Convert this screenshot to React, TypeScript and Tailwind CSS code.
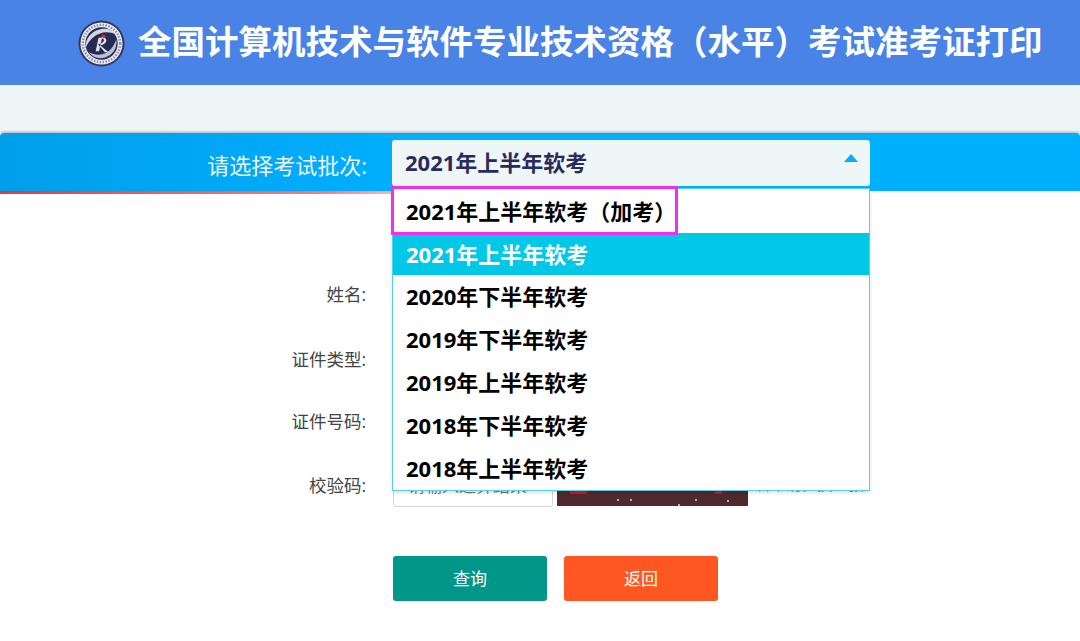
import React from "react";

const font = { fontFamily: '"Open Sans","Noto Sans CJK SC",sans-serif' };
const options = ["2020年下半年软考", "2019年下半年软考", "2019年上半年软考", "2018年下半年软考", "2018年上半年软考"];

function Logo() {
  return (
    <svg width="47" height="47" viewBox="0 0 48 48" className="mt-[4px] shrink-0">
      <circle cx="24" cy="24" r="23.500" fill="#34365a" />
      <circle cx="24" cy="24" r="21.500" fill="#e9eaf1" />
      <circle cx="24" cy="24" r="19" fill="none" stroke="#8a8da8" strokeWidth="2.500" strokeDasharray="1.500 1.500" />
      <circle cx="24" cy="24" r="16.500" fill="#262a55" />
      <path d="M8 28C7 18 16 9 27 9c5 0 9 2 12 6-6-3-12-3-17-1-6 2-11 7-14 14Z" fill="#d5d7e3" />
      <path d="M39 20c2 10-6 19-16 19-5 0-9-2-12-6 6 3 12 3 17 1 5-2 9-8 11-14Z" fill="#bcc0d2" />
      <path d="M18 32l3-14h3.500l-3 14h-3.500Zm5-6c4-1 6-3 6-5 0-2-2-4-5-4v2c2 0 2.500 1 2.500 2 0 1.500-3 3-6 4l7 8h3.500l-8-7Z" fill="#e4e5ee" />
      <path d="M24 14l5 2.500-3.500 2.500-1.500-5Z" fill="#d8263a" />
    </svg>
  );
}

function FormRow({ label, className, children }: { label: string; className: string; children?: React.ReactNode }) {
  return (
    <div className={`flex items-center ${className}`}>
      <div className="w-[366px] shrink-0 text-right text-[17.500px] leading-[22px] text-[#444]">{label}:</div>
      <div className="ml-[27px] flex flex-1 items-center">{children}</div>
    </div>
  );
}

export default function App() {
  return (
    <div className="relative h-[641px] w-[1080px] overflow-hidden bg-white" style={font}>
      <header className="flex h-[85px] items-center bg-[#4a83e6] pb-[2px] pl-[78px]">
        <Logo />
        <h1 className="ml-[13px] whitespace-nowrap text-[33.500px] font-bold leading-none text-white">
          全国计算机技术与软件专业技术资格（水平）考试准考证打印
        </h1>
      </header>
      <div className="h-[48px] bg-[#eef6f8]" />
      <div className="relative z-10 flex h-[58px] items-start rounded-t-[4px] bg-gradient-to-r from-[#009fea] to-[#00b0ff] to-40% shadow-[0_-1px_3px_rgba(0,0,0,0.3)]">
        <div className="w-[367px] shrink-0 pt-[17px] text-right text-[22px] leading-[30px] text-[#eef6f8]">请选择考试批次:</div>
        <div className="ml-[25px] mt-[7px] flex h-[46px] w-[478px] items-center justify-between rounded-[3px] bg-[#eef6f8] pb-[2px] pl-[13px] pr-[12px]">
          <span className="text-[22px] font-bold text-[#2a2a5c]">2021年上半年软考</span>
          <svg width="14" height="8" viewBox="0 0 14 8" className="mb-[8px]"><path d="M7 0l7 8H0Z" fill="#00aeff" /></svg>
        </div>
      </div>
      <div className="h-[3px] bg-gradient-to-r from-[#e63946] via-[#f0808a] via-30% to-white to-45%" />

      <main className="pt-[89px]">
        <FormRow label="姓名" className="h-[22px]" />
        <FormRow label="证件类型" className="mt-[43px] h-[22px]" />
        <FormRow label="证件号码" className="mt-[40px] h-[22px]" />
        <FormRow label="校验码" className="mt-[30px] h-[45px]">
          <div className="flex h-[45px] w-[160px] items-center whitespace-nowrap rounded-[3px] border border-[#d5d5d5] pl-[14px] pt-[2px] text-[17px] text-[#777]">请输入运算结果</div>
          <div className="relative ml-[4px] h-[44px] w-[191px] self-start overflow-hidden rounded-[1px] bg-[#4f2830]">
            <span className="absolute left-[13px] top-[29px] h-[3px] w-[17px] bg-[#d01818]" />
            <span className="absolute left-[158px] top-[29px] h-[3px] w-[7px] bg-[#d01818]" />
            <span className="absolute left-[60px] top-[37px] h-[2px] w-[2px] rounded-full bg-[#ddd]" />
            <span className="absolute left-[73px] top-[37px] h-[2px] w-[2px] rounded-full bg-[#ddd]" />
            <span className="absolute left-[121px] top-[42px] h-[2px] w-[2px] rounded-full bg-[#ddd]" />
            <span className="absolute left-[138px] top-[37px] h-[2px] w-[2px] rounded-full bg-[#ddd]" />
            <span className="absolute left-[170px] top-[38px] h-[2px] w-[2px] rounded-full bg-[#ddd]" />
          </div>
          <span className="ml-[7px] whitespace-nowrap text-[15.500px] text-[#4a83e6]">看不清，换一张</span>
        </FormRow>
        <div className="ml-[393px] mt-[49px] flex gap-[17px]">
          <button className="h-[45px] w-[154px] rounded-[3px] bg-[#009688] text-[17px] text-white">查询</button>
          <button className="h-[45px] w-[154px] rounded-[3px] bg-[#ff5722] text-[17px] text-white">返回</button>
        </div>
      </main>

      <div className="absolute left-[392px] top-[188px] z-20 w-[478px] border border-[#55d0e8] bg-white shadow-[0_2px_4px_rgba(0,0,0,0.12)]">
        <div className="flex h-[44px] items-center pl-[13px] text-[22px] font-bold text-black">2021年上半年软考（加考）</div>
        <div className="flex h-[42px] items-center bg-[#00c8e6] pl-[13px] text-[22px] font-bold text-white">2021年上半年软考</div>
        {options.map((o) => (
          <div key={o} className="flex h-[43px] items-center pb-[1px] pl-[13px] text-[22px] font-bold text-black">{o}</div>
        ))}
      </div>
      <div className="absolute left-[391px] top-[186px] z-30 h-[49px] w-[287px] border-[3px] border-[#f22ff0]" />
    </div>
  );
}
